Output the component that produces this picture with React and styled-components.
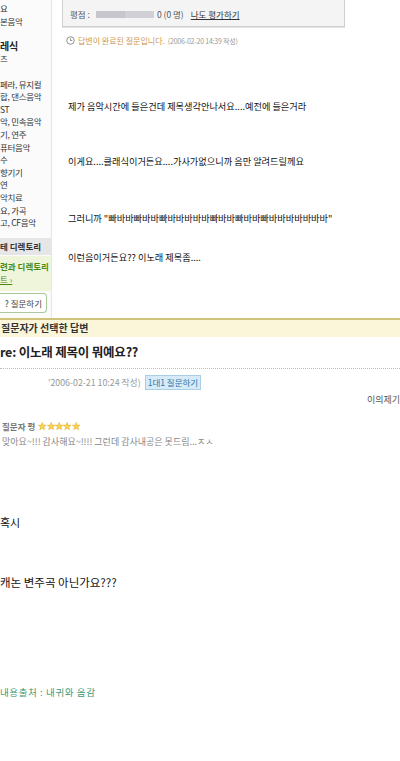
import React from 'react';
import styled, { createGlobalStyle } from 'styled-components';

const GlobalStyle = createGlobalStyle`
    html, body {
        margin: 0;
        padding: 0;
        background: #ffffff;
        font-family: "Noto Sans CJK KR", "Noto Sans", sans-serif;
        overflow: hidden;
    }
`

const Page = styled.div`
    width: 400px;
    height: 761px;
    overflow: hidden;
    background: #ffffff;
`

const TopSection = styled.div`
    display: flex;
    height: 318px;
`

const Sidebar = styled.div`
    width: 52px;
    flex-shrink: 0;
    display: flex;
    flex-direction: column;
    border-right: 1px solid #e6e6e6;
    background: #fbfbfb;
    padding-top: 2px;
    box-sizing: border-box;
    overflow: hidden;
`

const SideItem = styled.div`
    height: 12.6px;
    line-height: 12.6px;
    font-size: ${props => props.$header ? '10px' : '8.5px'};
    font-weight: ${props => props.$header ? 'bold' : 'normal'};
    color: ${props => props.$header ? '#222' : '#333'};
    white-space: nowrap;
    letter-spacing: -0.3px;
`

const DirBand = styled.div`
    margin-top: 9px;
    height: 17px;
    line-height: 17px;
    background: #e6e6e6;
    font-size: 8.5px;
    font-weight: bold;
    color: #333;
    white-space: nowrap;
`

const GreenBox = styled.div`
    margin-top: 1px;
    height: 35px;
    background: #eef5da;
    padding-top: 4px;
    box-sizing: border-box;
    font-size: 8.5px;
    line-height: 13px;
    color: #4b8a12;
    font-weight: bold;
    white-space: nowrap;
`

const GreenLink = styled.div`
    text-decoration: underline;
    font-weight: normal;
`

const AskButton = styled.div`
    margin-top: 2px;
    width: 47px;
    height: 20px;
    box-sizing: border-box;
    border: 1px solid #a9c79a;
    border-left: none;
    border-radius: 0 4px 4px 0;
    background: #ffffff;
    font-size: 8.5px;
    line-height: 18px;
    color: #444;
    white-space: nowrap;
    display: flex;
    justify-content: flex-end;
    padding-right: 4px;
`

const Main = styled.div`
    flex: 1;
    display: flex;
    flex-direction: column;
    padding-left: 10px;
`

const RatingBox = styled.div`
    width: 283px;
    height: 27px;
    box-sizing: border-box;
    border: 1px solid #cfcfcf;
    border-top: none;
    background: #f4f4f4;
    box-shadow: 0 1px 0 #e2e2e2;
    display: flex;
    align-items: center;
    padding: 2px 0 0 7px;
    font-size: 8.5px;
    color: #555;
    white-space: nowrap;
`

const RatingBar = styled.div`
    width: 58px;
    height: 7px;
    margin: 0 3px 0 6px;
    background: linear-gradient(to right, #c6c6cc 0, #c6c6cc 50%, #d0d0d6 50%, #d0d0d6 100%);
`

const RateLink = styled.span`
    margin-left: 7px;
    color: #333;
    text-decoration: underline;
    font-size: 8.5px;
`

const StatusLine = styled.div`
    margin: 8px 0 0 4px;
    display: flex;
    align-items: center;
    font-size: 8px;
    white-space: nowrap;
`

const StatusText = styled.span`
    color: #d09850;
    margin-left: 3px;
`

const StatusDate = styled.span`
    color: #999;
    margin-left: 3px;
    font-size: 7px;
    letter-spacing: -0.2px;
`

const Question = styled.div`
    padding-left: 6px;
    display: flex;
    flex-direction: column;
`

const QLine = styled.p`
    margin: ${props => props.$gap}px 0 0 0;
    font-size: 9.2px;
    line-height: 12px;
    color: #111;
    white-space: nowrap;
`

const SelectedBand = styled.div`
    height: 19px;
    border-top: 2px solid #cfc27a;
    background: #fbf6da;
    box-sizing: border-box;
    padding-left: 1px;
    font-size: 10px;
    font-weight: bold;
    line-height: 16px;
    color: #333;
`

const AnswerTitle = styled.h2`
    margin: 6px 0 0 0;
    font-size: 12.5px;
    line-height: 18px;
    font-weight: bold;
    color: #222;
    letter-spacing: -0.2px;
`

const DottedRule = styled.div`
    margin-top: 7px;
    border-top: 1px dotted #bdbdbd;
`

const MetaRow = styled.div`
    margin-top: 6px;
    padding-left: 48px;
    display: flex;
    align-items: center;
    font-size: 8.8px;
    color: #999;
    white-space: nowrap;
`

const OneOnOne = styled.span`
    margin-left: 4px;
    padding: 0 2px;
    height: 13px;
    line-height: 13px;
    background: #d6ebf7;
    border: 1px solid #a8cfe3;
    color: #2f78b0;
    font-size: 8.5px;
`

const ObjectRow = styled.div`
    margin-top: 3px;
    display: flex;
    justify-content: flex-end;
    font-size: 9px;
    color: #555;
    white-space: nowrap;
`

const Review = styled.div`
    margin-top: 12px;
    padding-left: 2px;
    font-size: 9px;
    color: #888;
    line-height: 16px;
    white-space: nowrap;
`

const ReviewHead = styled.div`
    display: flex;
    align-items: center;
    font-weight: bold;
    font-size: 8.5px;
    color: #777;
`

const Stars = styled.span`
    margin-left: 3px;
    display: flex;
`

const Body = styled.div`
    display: flex;
    flex-direction: column;
`

const BodyLine = styled.p`
    margin: ${props => props.$gap}px 0 0 0;
    font-size: ${props => props.$size}px;
    line-height: 16px;
    color: ${props => props.$color || '#111'};
    letter-spacing: ${props => props.$spacing || 0}px;
    white-space: nowrap;
`

const Star = () => (
    <svg width="8.4" height="8.4" viewBox="0 0 10 10">
        <polygon
            points="5,0.5 6.2,3.7 9.6,3.8 6.9,5.9 7.9,9.3 5,7.3 2.1,9.3 3.1,5.9 0.4,3.8 3.8,3.7"
            fill="#f7d54a"
            stroke="#e0a830"
            strokeWidth="0.6"
        />
    </svg>
)

const Clock = () => (
    <svg width="9" height="9" viewBox="0 0 10 10">
        <circle cx="5" cy="5" r="4.2" fill="none" stroke="#777" strokeWidth="0.9" />
        <path d="M5 2.5 V5 H7" fill="none" stroke="#777" strokeWidth="0.9" />
    </svg>
)

const sideItems = [
    { text: '요' },
    { text: '본음악' },
    { text: '' },
    { text: '레식', header: true },
    { text: '즈' },
    { text: '' },
    { text: '페라, 뮤지컬' },
    { text: '합, 댄스음악' },
    { text: 'ST' },
    { text: '악, 민속음악' },
    { text: '기, 연주' },
    { text: '퓨터음악' },
    { text: '수' },
    { text: '향기기' },
    { text: '연' },
    { text: '악치료' },
    { text: '요, 가곡' },
    { text: '고, CF음악' },
]

const App = () => {
    return (
        <Page>
            <GlobalStyle />
            <TopSection>
                <Sidebar>
                    {sideItems.map((item, i) => (
                        <SideItem key={i} $header={item.header}>{item.text}</SideItem>
                    ))}
                    <DirBand>테 디렉토리</DirBand>
                    <GreenBox>
                        <div>련과 디렉토리</div>
                        <GreenLink>트 ›</GreenLink>
                    </GreenBox>
                    <AskButton>? 질문하기</AskButton>
                </Sidebar>
                <Main>
                    <RatingBox>
                        평점 :
                        <RatingBar />
                        0 (0 명)
                        <RateLink>나도 평가하기</RateLink>
                    </RatingBox>
                    <StatusLine>
                        <Clock />
                        <StatusText>답변이 완료된 질문입니다.</StatusText>
                        <StatusDate>(2006-02-20 14:39 작성)</StatusDate>
                    </StatusLine>
                    <Question>
                        <QLine $gap={54}>제가 음악시간에 들은건데 제목생각안나서요....예전에 들은거라</QLine>
                        <QLine $gap={43}>이게요....클래식이거든요....가사가없으니까 음만 알려드릴께요</QLine>
                        <QLine $gap={45}>그러니까 "빠바바빠바바빠바바바바바빠바바빠바바빠바바바바바바바"</QLine>
                        <QLine $gap={27}>이런음이거든요?? 이노래 제목좀....</QLine>
                    </Question>
                </Main>
            </TopSection>
            <SelectedBand>질문자가 선택한 답변</SelectedBand>
            <AnswerTitle>re: 이노래 제목이 뭐예요??</AnswerTitle>
            <DottedRule />
            <MetaRow>
                '2006-02-21 10:24 작성)
                <OneOnOne>1대1 질문하기</OneOnOne>
            </MetaRow>
            <ObjectRow>이의제기</ObjectRow>
            <Review>
                <ReviewHead>
                    질문자 평
                    <Stars>
                        <Star /><Star /><Star /><Star /><Star />
                    </Stars>
                </ReviewHead>
                <div>맞아요~!!! 감사해요~!!!! 그런데 감사내공은 못드림...ㅈㅅ</div>
            </Review>
            <Body>
                <BodyLine $gap={64} $size={11}>혹시</BodyLine>
                <BodyLine $gap={44} $size={11.5}>캐논 변주곡 아닌가요???</BodyLine>
                <BodyLine $gap={94} $size={9.5} $spacing={0.6} $color="#3f9a72">내용출처 : 내귀와 음감</BodyLine>
            </Body>
        </Page>
    );
};

export default App;
